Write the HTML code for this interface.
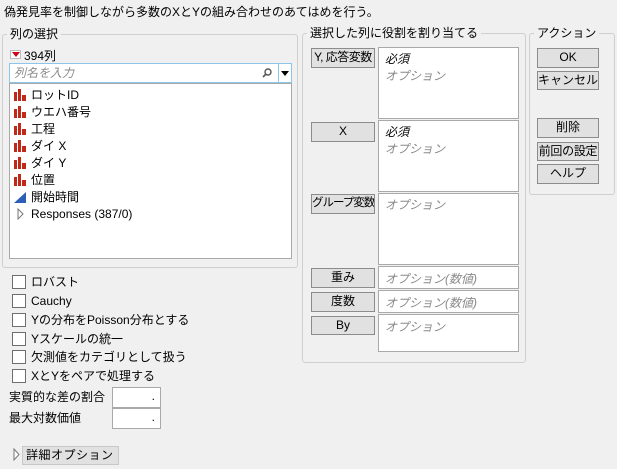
<!DOCTYPE html>
<html><head><meta charset="utf-8"><style>
*{box-sizing:border-box;margin:0;padding:0}
body{width:617px;height:469px;background:#f0f0f0;font-family:"Liberation Sans","Noto Sans CJK JP",sans-serif;font-size:12px;color:#000;position:relative;overflow:hidden}
.a{position:absolute;white-space:nowrap}
.grp{position:absolute;border:1px solid #cfcfcf;border-radius:3px}
.lbl{position:absolute;background:#f0f0f0;padding:0 3px;top:-10px;line-height:18px;white-space:nowrap}
.btn{position:absolute;background:#e1e1e1;border:1px solid #8c8c8c;text-align:center;line-height:17px;font-size:12px;white-space:nowrap;overflow:hidden}
.box{position:absolute;background:#fff;border:1px solid #a9a9a9}
.ph{color:#8a8a8a;font-style:italic;position:absolute;left:6px;white-space:nowrap}
.req{font-style:italic;position:absolute;left:6px;top:2px}
.cb{position:absolute;width:14px;height:14px;border:1px solid #6d6d6d;background:#fff}
.item{position:absolute;left:4px;height:17px;line-height:17px;white-space:nowrap}
.item svg{position:absolute;left:0;top:2px}
.item span{position:absolute;left:17px}
</style></head><body>
<div class="a" style="left:4px;top:4px;line-height:16px">偽発見率を制御しながら多数のXとYの組み合わせのあてはめを行う。</div>

<div class="grp" style="left:2px;top:34px;width:296px;height:234px">
<div class="lbl" style="left:4px">列の選択</div>
</div>
<div class="a" style="left:10px;top:50px;width:11px;height:9px;border:1px solid #bbb;background:#fff"></div>
<svg class="a" style="left:12px;top:52px" width="8" height="5"><path d="M0 0H8L4 5Z" fill="#d0021b"/></svg>
<div class="a" style="left:24px;top:47px;line-height:18px">394列</div>
<div class="a" style="left:9px;top:63px;width:283px;height:20px;background:#fff;border:1px solid #8cc6ea"></div>
<div class="a" style="left:14px;top:64px;line-height:18px;color:#8a8a8a;font-style:italic">列名を入力</div>
<svg class="a" style="left:262px;top:68px" width="10" height="10"><circle cx="6" cy="4" r="3" fill="none" stroke="#555" stroke-width="1.4"/><path d="M4 6L1 9" stroke="#555" stroke-width="1.6"/></svg>
<div class="a" style="left:278px;top:64px;width:1px;height:18px;background:#8cc6ea"></div>
<svg class="a" style="left:281px;top:71px" width="8" height="5"><path d="M0 0H8L4 5Z" fill="#000"/></svg>
<div class="a" style="left:9px;top:83px;width:283px;height:176px;background:#fff;border:1px solid #a9a9a9">
<div class="item" style="top:3px"><svg width="13" height="12"><rect x="0" y="3" width="3" height="9" fill="#c0281a"/><rect x="4" y="0" width="3" height="12" fill="#c0281a"/><rect x="8" y="6" width="4" height="6" fill="#c0281a"/></svg><span>ロットID</span></div>
<div class="item" style="top:20px"><svg width="13" height="12"><rect x="0" y="3" width="3" height="9" fill="#c0281a"/><rect x="4" y="0" width="3" height="12" fill="#c0281a"/><rect x="8" y="6" width="4" height="6" fill="#c0281a"/></svg><span>ウエハ番号</span></div>
<div class="item" style="top:37px"><svg width="13" height="12"><rect x="0" y="3" width="3" height="9" fill="#c0281a"/><rect x="4" y="0" width="3" height="12" fill="#c0281a"/><rect x="8" y="6" width="4" height="6" fill="#c0281a"/></svg><span>工程</span></div>
<div class="item" style="top:54px"><svg width="13" height="12"><rect x="0" y="3" width="3" height="9" fill="#c0281a"/><rect x="4" y="0" width="3" height="12" fill="#c0281a"/><rect x="8" y="6" width="4" height="6" fill="#c0281a"/></svg><span>ダイ X</span></div>
<div class="item" style="top:71px"><svg width="13" height="12"><rect x="0" y="3" width="3" height="9" fill="#c0281a"/><rect x="4" y="0" width="3" height="12" fill="#c0281a"/><rect x="8" y="6" width="4" height="6" fill="#c0281a"/></svg><span>ダイ Y</span></div>
<div class="item" style="top:88px"><svg width="13" height="12"><rect x="0" y="3" width="3" height="9" fill="#c0281a"/><rect x="4" y="0" width="3" height="12" fill="#c0281a"/><rect x="8" y="6" width="4" height="6" fill="#c0281a"/></svg><span>位置</span></div>
<div class="item" style="top:105px"><svg width="13" height="12"><path d="M0 12L12 1V12Z" fill="#2c5fb5"/></svg><span>開始時間</span></div>
<div class="item" style="top:122px"><svg width="13" height="12"><path d="M4 1L9 6L4 11Z" fill="#fff" stroke="#777"/></svg><span>Responses (387/0)</span></div>
</div>

<div class="grp" style="left:302px;top:33px;width:224px;height:330px">
<div class="lbl" style="left:4px">選択した列に役割を割り当てる</div>
</div>
<div class="btn" style="left:311px;top:48px;width:64px;height:20px;letter-spacing:-0.5px">Y, 応答変数</div>
<div class="box" style="left:378px;top:47px;width:141px;height:72px"><div class="req">必須</div><div class="ph" style="top:19px">オプション</div></div>
<div class="btn" style="left:311px;top:122px;width:64px;height:20px">X</div>
<div class="box" style="left:378px;top:120px;width:141px;height:72px"><div class="req">必須</div><div class="ph" style="top:19px">オプション</div></div>
<div class="btn" style="left:311px;top:194px;width:64px;height:20px;letter-spacing:-1px;font-size:11.5px">グループ変数</div>
<div class="box" style="left:378px;top:193px;width:141px;height:72px"><div class="ph" style="top:2px">オプション</div></div>
<div class="btn" style="left:311px;top:268px;width:64px;height:20px">重み</div>
<div class="box" style="left:378px;top:266px;width:141px;height:23px"><div class="ph" style="top:3px">オプション(数値)</div></div>
<div class="btn" style="left:311px;top:292px;width:64px;height:20px">度数</div>
<div class="box" style="left:378px;top:290px;width:141px;height:23px"><div class="ph" style="top:3px">オプション(数値)</div></div>
<div class="btn" style="left:311px;top:316px;width:64px;height:19px">By</div>
<div class="box" style="left:378px;top:314px;width:141px;height:38px"><div class="ph" style="top:3px">オプション</div></div>

<div class="grp" style="left:529px;top:33px;width:86px;height:162px">
<div class="lbl" style="left:4px">アクション</div>
</div>
<div class="btn" style="left:537px;top:48px;width:62px;height:20px">OK</div>
<div class="btn" style="left:537px;top:71px;width:62px;height:19px">キャンセル</div>
<div class="btn" style="left:537px;top:118px;width:62px;height:20px">削除</div>
<div class="btn" style="left:537px;top:142px;width:62px;height:19px;letter-spacing:-0.3px">前回の設定</div>
<div class="btn" style="left:537px;top:164px;width:62px;height:20px">ヘルプ</div>

<div class="cb" style="left:12px;top:275px"></div><div class="a" style="left:31px;top:274px;line-height:16px">ロバスト</div>
<div class="cb" style="left:12px;top:294px"></div><div class="a" style="left:31px;top:293px;line-height:16px">Cauchy</div>
<div class="cb" style="left:12px;top:313px"></div><div class="a" style="left:31px;top:312px;line-height:16px">Yの分布をPoisson分布とする</div>
<div class="cb" style="left:12px;top:332px"></div><div class="a" style="left:31px;top:331px;line-height:16px">Yスケールの統一</div>
<div class="cb" style="left:12px;top:350px"></div><div class="a" style="left:31px;top:349px;line-height:16px">欠測値をカテゴリとして扱う</div>
<div class="cb" style="left:12px;top:369px"></div><div class="a" style="left:31px;top:368px;line-height:16px">XとYをペアで処理する</div>

<div class="a" style="left:9px;top:389px;line-height:16px">実質的な差の割合</div>
<div class="box" style="left:112px;top:387px;width:49px;height:21px"><span class="a" style="right:5px;top:1px">.</span></div>
<div class="a" style="left:9px;top:410px;line-height:16px">最大対数価値</div>
<div class="box" style="left:112px;top:408px;width:49px;height:21px"><span class="a" style="right:5px;top:1px">.</span></div>

<svg class="a" style="left:13px;top:448px" width="8" height="13"><path d="M1 1L6 6.5L1 12Z" fill="#fff" stroke="#777"/></svg>
<div class="a" style="left:22px;top:446px;width:97px;height:19px;background:#e1e1e1;border:1px solid #c8c8c8;line-height:17px;padding-left:3px;letter-spacing:0.5px">詳細オプション</div>
</body></html>
